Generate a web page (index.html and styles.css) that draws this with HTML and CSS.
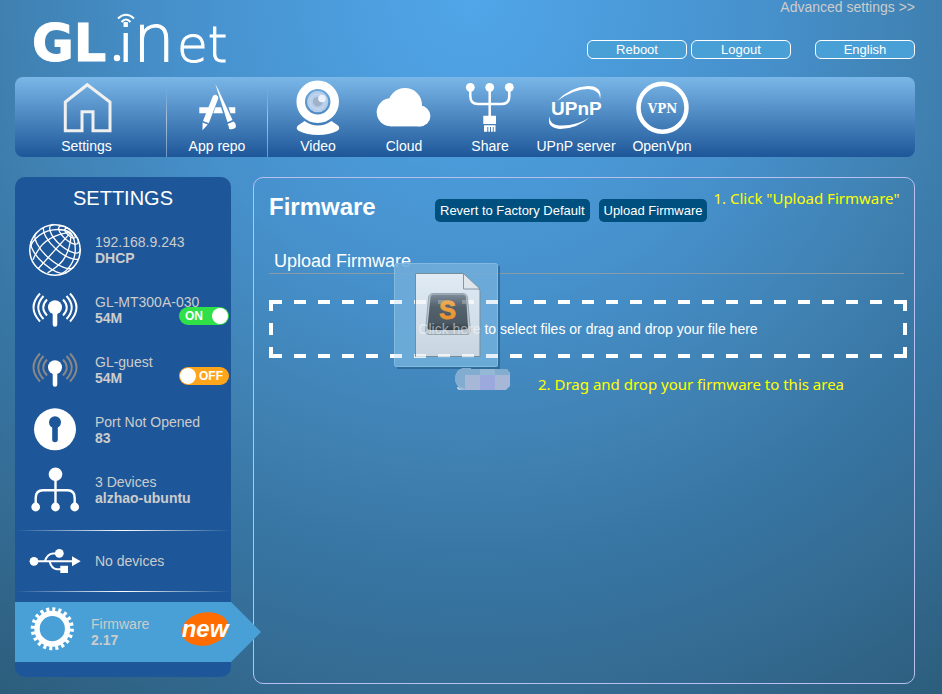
FILE: index.html
```html
<!DOCTYPE html>
<html lang="en">
<head>
<meta charset="utf-8">
<meta name="viewport" content="width=device-width, initial-scale=1">
<title>GL.iNet - Firmware</title>
<link rel="stylesheet" href="styles.css">
</head>
<body>
<div class="page">
  <header class="top">
    <svg class="logo" width="200" height="76" viewBox="33 0 200 76" role="img" aria-label="GL.iNet">
      <text class="logo-heavy" x="32" y="61">GL</text>
      <circle cx="117" cy="58" r="3.2"/>
      <text class="logo-thin logo-i" x="119" y="61">i</text>
      <g class="logo-waves"><path d="M121.500 22Q126 17 130.500 22"/><path d="M118 18.500Q126 11 134 18.500"/></g>
      <text class="logo-tall" x="133" y="61">n</text>
      <text class="logo-thin" x="177" y="62">et</text>
    </svg>
    <div class="top-side">
      <a class="advanced" href="#advanced">Advanced settings &gt;&gt;</a>
      <div class="top-buttons">
        <button type="button">Reboot</button>
        <button type="button">Logout</button>
        <button type="button" class="language">English</button>
      </div>
    </div>
  </header>

  <nav class="nav">
    <a class="nav-item nav-settings" href="#settings">
      <svg viewBox="0 0 60 56"><path d="M30.300 5.700L53 23V51.700H36V32.700H25V51.700H8.300V23Z" fill="none" stroke="#f0f0f0" stroke-width="3"/></svg>
      <span>Settings</span>
    </a>
    <a class="nav-item nav-repo" href="#repo">
      <svg viewBox="0 0 60 56" fill="#fff">
        <path d="M12.300 28.300H22L19.800 34.300H12.300ZM28.500 28.300H34L36 34.300H26.200ZM41.500 28.300H48.300V34.300H43.500Z"/>
        <path d="M25.700 17.500Q27 15 29.300 16Q31.700 17 31.200 19.500L21.800 44.300L16 42Z"/>
        <path d="M15.600 43.500L20.800 45.600L15.500 51.300Z"/>
        <path d="M28.300 5L31 10L45.500 41L40.500 43.300Z"/>
        <path d="M40.500 45L46.500 42.400Q49.500 44.500 48.700 48.500Q46 51.300 42 49.800Q42.200 47 40.500 45Z"/>
      </svg>
      <span>App repo</span>
    </a>
    <div class="nav-group">
      <a class="nav-item" href="#video">
        <svg viewBox="0 0 60 56">
          <path d="M16.500 42Q30 51 43.500 42L50 46.500Q53 49.500 49 52Q41 56 30 56Q19 56 11 52Q7 49.500 10 46.500Z" fill="#fff"/>
          <circle cx="29.700" cy="22.700" r="17" fill="none" stroke="#fff" stroke-width="8.500"/>
          <circle cx="29.700" cy="22.700" r="10.600" fill="#b4cdea"/>
          <circle cx="29.700" cy="22.700" r="7.500" fill="none" stroke="#c8dbf0"/>
          <circle cx="29.700" cy="22.700" r="4.800" fill="#9fb2c8"/>
          <circle cx="34" cy="19.500" r="3.800" fill="#eaf3fc"/>
        </svg>
        <span>Video</span>
      </a>
      <a class="nav-item" href="#cloud">
        <svg viewBox="0 0 60 56" fill="#fff"><circle cx="31" cy="26" r="17"/><circle cx="16.700" cy="33.300" r="14"/><circle cx="46" cy="37" r="10.400"/><path d="M16.700 30H46V47.400H16.700Z"/></svg>
        <span>Cloud</span>
      </a>
      <a class="nav-item" href="#share">
        <svg viewBox="0 0 60 56" fill="#fff">
          <circle cx="10.300" cy="8.300" r="4.400"/><circle cx="29.700" cy="8.300" r="4.400"/><circle cx="49.300" cy="8.300" r="4.400"/>
          <path d="M10.300 9V17Q10.300 25 18 25H41.600Q49.300 25 49.300 17V9M29.700 9V38" fill="none" stroke="#fff" stroke-width="2.500"/>
          <path d="M23.300 36.700H36V45H23.300ZM24 46.300H35.500V52.800H33.700V48H32.800V52.800H31V48H30V52.800H28.300V48H27.300V52.800H24Z"/>
        </svg>
        <span>Share</span>
      </a>
      <a class="nav-item" href="#upnp">
        <svg viewBox="0 0 60 56" fill="#fff">
          <path d="M11 22Q24 8 42 7Q57 7 54 20.500Q54 11 42 10Q28 10 11 22Z"/>
          <path d="M3.800 37.500Q3 45 13 46.500Q30 47.500 44 38.300Q30 50.500 13 50Q0 48 3.800 37.500Z"/>
          <text class="upnp-mark" x="5" y="35.700">UPnP</text>
        </svg>
        <span>UPnP server</span>
      </a>
      <a class="nav-item" href="#openvpn">
        <svg viewBox="0 0 60 56"><circle cx="30.500" cy="28.700" r="24" fill="none" stroke="#fff" stroke-width="4.500"/><text class="vpn-mark" x="30.500" y="33.500">VPN</text></svg>
        <span>OpenVpn</span>
      </a>
    </div>
  </nav>

  <div class="content">
    <aside class="sidebar">
      <h2>SETTINGS</h2>
      <ul class="status">
        <li>
          <svg viewBox="0 0 60 60" fill="none" stroke="#fff" stroke-width="1.500">
            <circle cx="30" cy="30" r="25.200"/>
            <g transform="translate(30 30) rotate(42)" stroke-width="1.300">
              <ellipse cy="-22.600" rx="6.600" ry="2.600"/><ellipse cy="-20.200" rx="12.500" ry="5"/>
              <path d="M-18.200 -17.900A19.500 7.800 0 1 0 18.200 -17.900M-23.700 -9.500A24 9.600 0 0 0 23.700 -9.500M-25.500 0A25.500 10.200 0 0 0 25.500 0M-23.700 9.500A24 9.600 0 0 0 23.700 9.500"/>
              <path d="M0 -23.400V25.500M0 -23.400C5.500 -19 14.500 -4 12.750 8.800Q12 16 9.800 22M0 -23.400C-5.500 -19 -14.500 -4 -12.750 8.800Q-12 16 -9.800 22M0 -23.400C10 -21 22 -10 22.100 5.100Q22.200 9 20.800 13M0 -23.400C-10 -21 -22 -10 -22.100 5.100Q-22.200 9 -20.800 13"/>
            </g>
          </svg>
          <p>192.168.9.243<b>DHCP</b></p>
        </li>
        <li>
          <svg viewBox="0 0 60 60">
            <path d="M15 13.500Q2 27.500 15 41.500M18.500 16Q8 27.500 18.500 39M22 19.500Q14.500 27.500 22 35.500M45 13.500Q58 27.500 45 41.500M41.500 16Q52 27.500 41.500 39M38 19.500Q45.500 27.500 38 35.500" fill="none" stroke="#fff" stroke-width="2"/>
            <circle cx="30" cy="27.300" r="7" fill="#fff"/><path d="M30 30V44.500" stroke="#fff" stroke-width="4.600" stroke-linecap="round"/>
          </svg>
          <p>GL-MT300A-030<b>54M</b></p>
          <label class="toggle"><input type="checkbox" checked aria-label="GL-MT300A-030"><span>ON</span></label>
        </li>
        <li>
          <svg viewBox="0 0 60 60">
            <path d="M15 13.500Q2 27.500 15 41.500M18.500 16Q8 27.500 18.500 39M22 19.500Q14.500 27.500 22 35.500M45 13.500Q58 27.500 45 41.500M41.500 16Q52 27.500 41.500 39M38 19.500Q45.500 27.500 38 35.500" fill="none" stroke="#868889" stroke-width="2"/>
            <circle cx="30" cy="27.300" r="7" fill="#fff"/><path d="M30 30V44.500" stroke="#fff" stroke-width="4.600" stroke-linecap="round"/>
          </svg>
          <p>GL-guest<b>54M</b></p>
          <label class="toggle"><input type="checkbox" aria-label="GL-guest"><span>OFF</span></label>
        </li>
        <li>
          <svg viewBox="0 0 60 60"><circle cx="30" cy="29.300" r="21" fill="#fff"/><circle cx="30" cy="22.300" r="6" fill="#1e5799"/><path d="M30 24V39.500" stroke="#1e5799" stroke-width="5.600" stroke-linecap="round"/></svg>
          <p>Port Not Opened<b>83</b></p>
        </li>
        <li>
          <svg viewBox="0 0 60 60" fill="#fff">
            <path d="M10.700 47V38Q10.700 30.300 18 30.300H42.500Q49.700 30.300 49.700 38V47M30.500 14V47" fill="none" stroke="#fff" stroke-width="2.400"/>
            <circle cx="30.500" cy="14.300" r="6.800"/><circle cx="10.700" cy="47" r="4.400"/><circle cx="30.500" cy="47" r="4.400"/><circle cx="49.700" cy="47" r="4.400"/>
          </svg>
          <p>3 Devices<b>alzhao-ubuntu</b></p>
        </li>
      </ul>
      <div class="usb">
        <svg viewBox="0 0 60 60" fill="#fff">
          <circle cx="9" cy="30.300" r="4.400"/><circle cx="34.300" cy="22.300" r="4.400"/><path d="M47 25.300L55.700 30.300L47 35.300ZM35.300 34.700H43V42H35.300Z"/>
          <path d="M9 30.300H48M20 30.300Q22 23 28 22.500H34M24.500 30.300Q26.500 38 32 38.300H36" fill="none" stroke="#fff" stroke-width="2"/>
        </svg>
        <p>No devices</p>
      </div>
      <a class="firmware" href="#firmware">
        <svg viewBox="0 0 60 60" fill="none" stroke="#fff"><circle cx="31.300" cy="26.700" r="19.300" stroke-width="4.500" pathLength="40" stroke-dasharray="1 1"/><circle cx="31.300" cy="26.700" r="15.300" stroke-width="5.400"/></svg>
        <p>Firmware<b>2.17</b></p>
        <svg class="new" viewBox="0 0 52 40"><ellipse cx="26" cy="20" rx="23.500" ry="16.500" transform="rotate(-12 26 20)" fill="#ff6c00"/><text x="26" y="28">new</text></svg>
      </a>
    </aside>

    <main class="panel">
      <div class="panel-head">
        <h1>Firmware</h1>
        <button type="button">Revert to Factory Default</button>
        <button type="button">Upload Firmware</button>
        <p class="note">1. Click "Upload Firmware"</p>
      </div>
      <h3>Upload Firmware</h3>
      <div class="drop-area">
        <button type="button" class="drop"><span class="drop-text"><span>Click here</span> to select files or drag and drop your file here</span></button>
        <svg class="dragged" width="122" height="132" viewBox="392 261 122 132" aria-hidden="true">
          <defs>
            <linearGradient id="sheet" x2="0" y2="1"><stop stop-color="#e0ebf4"/><stop offset="1" stop-color="#c8d5e0"/></linearGradient>
            <linearGradient id="key" x2="0" y2="1"><stop stop-color="#7c8b97"/><stop offset=".35" stop-color="#53626d"/><stop offset=".8" stop-color="#4a5963"/><stop offset="1" stop-color="#303c45"/></linearGradient>
            <linearGradient id="letter" x2="0" y2="1"><stop stop-color="#f0b25c"/><stop offset="1" stop-color="#e58a24"/></linearGradient>
          </defs>
          <path d="M499 266V368H397" fill="none" stroke="#1f5279" stroke-width="2" opacity=".55"/>
          <rect x="394.500" y="263.500" width="103" height="103" rx="2" fill="#6fadd9" fill-opacity=".9" stroke="#83bbe0"/>
          <path d="M394 300H402V304H394ZM414 300H426V304H414ZM486 300H498V304H486ZM394 354H402V358H394ZM414 354H426V358H414ZM486 354H498V358H486Z" fill="#fff" opacity=".8"/>
          <path d="M415.500 273.500H463.500L480 290.500V356.500H415.500Z" fill="url(#sheet)" stroke="#768b9b"/>
          <path d="M416 300H426V304H416ZM462 300H474V304H462ZM416 354H426V357H416ZM438 354H450V357H438ZM462 354H474V357H462Z" fill="#fff" opacity=".7"/>
          <path d="M463.500 273.500V289H480Z" fill="#dfe7ed" stroke="#8496a3"/>
          <path d="M428.500 298Q429 293.500 433 293.500H463Q467 293.500 467.500 298L470.500 331Q470.500 334.500 467 334.500H429Q425.500 334.500 425.500 331Z" fill="#b9c5ce" stroke="#98a6b0"/>
          <path d="M430.500 297Q431 294.500 433 294.500H463Q465.500 294.500 466 297L468 327Q468 330 465 330H430.500Q427.500 330 427.500 327Z" fill="url(#key)"/>
          <path d="M438 300H450V304H438ZM462 300H466V304H462Z" fill="#fff" opacity=".25"/>
          <text class="ghost-letter" x="447.500" y="319">S</text>
          <path d="M458 387V389H463" fill="none" stroke="#fff"/>
          <path d="M464 368H471V369H507L510 373V386L506 390H463Q455 386 455 378Q456 369 464 368Z" fill="#a6b7d8"/>
          <path d="M464 368H471V369H480V375H465V389Q455 386 455 378Q456 369 464 368Z" fill="#82add1"/>
          <path d="M480 369H495V375H480Z" fill="#95b8d7"/><path d="M480 375H495V390H480Z" fill="#9ca9dc"/><path d="M495 369H507L510 375H495Z" fill="#83adce"/>
        </svg>
      </div>
      <p class="note note-drop">2. Drag and drop your firmware to this area</p>
    </main>
  </div>
</div>
</body>
</html>
```
FILE: styles.css
```css
* { box-sizing: border-box; }

body {
  margin: 0;
  min-height: 100vh;
  background: radial-gradient(circle farthest-corner at 50% 0, #50a6e9 0%, #4690cb 36%, #3f80b0 56%, #3775a3 68%, #346b92 83%, #2c5d7c 100%) no-repeat;
  font: 14px/16px "Liberation Sans", Arial, sans-serif;
  color: #fff;
}

h1, h2, h3, p, ul { margin: 0; padding: 0; }
ul { list-style: none; }
a { color: inherit; text-decoration: none; }
button { font-family: inherit; color: #fff; cursor: pointer; }

.page { padding: 0 27px 10px 15px; }

/* header */
.top {
  display: flex;
  justify-content: space-between;
  align-items: flex-start;
  height: 77px;
  padding-left: 18px;
}
.logo { overflow: visible; fill: #fff; }
.logo text {
  font-family: "DejaVu Sans Light", "DejaVu Sans", sans-serif;
  font-weight: 200;
  stroke: #fff;
  stroke-width: 1px;
}
.logo .logo-heavy { font-family: "DejaVu Sans", sans-serif; font-size: 51px; font-weight: 700; }
.logo-thin { font-size: 50px; }
.logo .logo-i { stroke-width: 2px; }
.logo-tall { font-size: 66px; }
.logo-waves { fill: none; stroke: #fff; stroke-width: 2; }

.top-side {
  display: flex;
  flex-direction: column;
  align-items: flex-end;
  gap: 25px;
}
.advanced { color: #ccc; line-height: 15px; }
.top-buttons { display: flex; gap: 4px; }
.top-buttons button {
  width: 100px;
  height: 19px;
  padding: 0;
  border: 1px solid #fff;
  border-radius: 6px;
  background: #49a0d6;
  font-size: 13px;
  line-height: 16px;
}
.top-buttons .language { margin-left: 20px; }

/* navigation */
.nav {
  display: flex;
  height: 80px;
  border-radius: 8px;
  background: linear-gradient(#7ab7e8, #1e5799);
}
.nav-item {
  display: flex;
  flex-direction: column;
  align-items: center;
  gap: 3px;
  width: 86px;
  padding-top: 2px;
  white-space: nowrap;
}
.nav-item svg { width: 60px; height: 56px; }
.nav-settings, .nav-repo {
  border-right: 1px solid;
  border-image: linear-gradient(transparent 15%, #a9c3dd 50%, #6f95c0) 1;
}
.nav-settings { width: 152px; padding-right: 8px; }
.nav-repo { width: 101px; }
.nav-group { display: flex; padding-left: 7px; }
.upnp-mark { font: bold 19px "Liberation Sans", sans-serif; }
.vpn-mark { font: bold 12px "DejaVu Serif", serif; text-anchor: middle; fill: #fff; }

/* columns */
.content { display: flex; gap: 22px; margin-top: 20px; }

.sidebar {
  flex: 0 0 216px;
  margin-bottom: 7px;
  padding-bottom: 15px;
  border-radius: 10px;
  background: #1e5799;
  color: #ccc;
}
.sidebar h2 {
  padding: 9px 0 10px;
  color: #fff;
  font-size: 20px;
  font-weight: 400;
  line-height: 24px;
  text-align: center;
}
.sidebar li, .usb, .firmware {
  position: relative;
  display: flex;
  align-items: center;
  gap: 10px;
  height: 60px;
  padding-left: 10px;
}
.sidebar svg { flex: none; width: 60px; height: 60px; }
.sidebar b { display: block; }

.toggle {
  position: absolute;
  top: 27px;
  right: 2px;
  height: 18px;
}
.toggle input {
  display: block;
  width: 50px;
  height: 18px;
  margin: 0;
  appearance: none;
  border-radius: 9px;
  background: #ffa51c;
}
.toggle input::before {
  content: "";
  display: block;
  width: 16px;
  height: 16px;
  margin: 1px;
  border-radius: 50%;
  background: #fff;
}
.toggle input:checked { background: #2fe048; }
.toggle input:checked::before { margin-left: 33px; }
.toggle span {
  position: absolute;
  top: 1px;
  right: 6px;
  color: #fff;
  font-size: 12px;
  font-weight: 700;
}
.toggle input:checked + span { right: auto; left: 6px; }

.usb {
  height: 62px;
  margin: 10px 0;
  background:
    linear-gradient(90deg, transparent, #fff, transparent) top / 100% 1px no-repeat,
    linear-gradient(90deg, transparent, #fff, transparent) bottom / 100% 1px no-repeat;
}

.firmware { padding-left: 6px; background: #49a0d6; }
.firmware::after {
  content: "";
  position: absolute;
  top: 0;
  left: 100%;
  width: 30px;
  height: 60px;
  background: #49a0d6;
  clip-path: polygon(0 0, 100% 50%, 0 100%);
}
.sidebar .new {
  width: 52px;
  height: 40px;
  margin: 0 0 6px auto;
}
.new text {
  fill: #fff;
  font: italic bold 24px "Liberation Sans", sans-serif;
  text-anchor: middle;
}

/* firmware panel */
.panel {
  flex: 1;
  min-width: 0;
  padding: 15px 7px 15px 15px;
  border: 1px solid #b8c0f0;
  border-radius: 10px;
}
.panel-head { display: flex; align-items: flex-start; }
.panel-head h1 {
  flex: 0 0 166px;
  font-size: 24px;
  line-height: 28px;
}
.panel-head button {
  height: 23px;
  margin: 6px 9px 0 0;
  padding: 0 5px;
  border: 0;
  border-radius: 5px;
  background: #00507f;
  font-size: 13px;
  white-space: nowrap;
}
.note {
  color: #ff0;
  font: 15px/20px "Noto Sans", "Open Sans", sans-serif;
  white-space: nowrap;
}
.panel-head .note { margin: -5px 0 0 -3px; }
.panel h3 {
  margin: 28px 3px 0 0;
  padding: 0 5px 1px;
  border-bottom: 1px solid #8a9ba6;
  font-size: 18px;
  font-weight: 400;
  line-height: 22px;
}
.drop-area { position: relative; margin-top: 26px; }
.drop {
  --dash-x: linear-gradient(90deg, #fff 50%, transparent 50%);
  --dash-y: linear-gradient(#fff 50%, transparent 50%);
  display: block;
  width: 100%;
  height: 58px;
  padding: 0;
  border: 0;
  background:
    var(--dash-x) 1px 0 / 24px 4px repeat-x,
    var(--dash-x) 1px 100% / 24px 4px repeat-x,
    var(--dash-y) 0 -1px / 4px 24px repeat-y,
    var(--dash-y) 100% -1px / 4px 24px repeat-y;
  font-size: 14px;
}
.drop-text { position: relative; z-index: 2; }
.drop-text span { color: rgba(255, 255, 255, 0.5); }
.dragged {
  position: absolute;
  z-index: 1;
  top: -39px;
  left: 123px;
  pointer-events: none;
}
.ghost-letter {
  fill: url(#letter);
  stroke: url(#letter);
  font: bold 25px "Liberation Sans", sans-serif;
  text-anchor: middle;
}
.note-drop { margin: 16px 0 0 269px; }
```
